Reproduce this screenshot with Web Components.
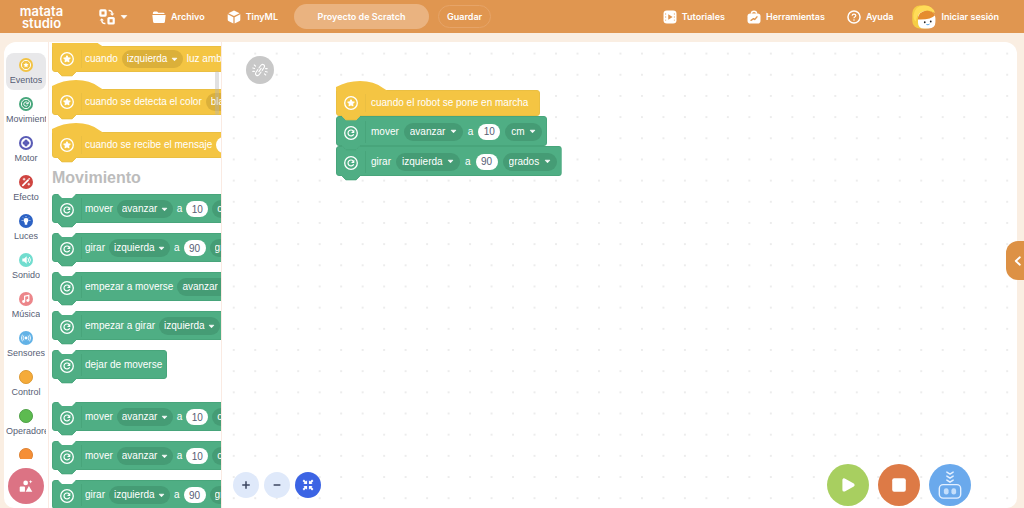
<!DOCTYPE html>
<html lang="es">
<head>
<meta charset="utf-8">
<title>Matata Studio</title>
<style>
  html, body { margin: 0; height: 100%; overflow: hidden; }
  body { background: #faeee2; font-family: Inter, "Liberation Sans", sans-serif; }
</style>
</head>
<body>
<studio-app></studio-app>
<script>
const define = (name, html, setup) => customElements.define(name, class extends HTMLElement {
  constructor() {
    super();
    const t = document.createElement('template');
    t.innerHTML = html;
    this.attachShadow({ mode: 'open' }).append(t.content.cloneNode(true));
  }
  connectedCallback() { if (setup) setup(this, this.shadowRoot); }
});

/* ---------- icons ---------- */
const STAR = '<path d="M8 4.4l1.1 2.2 2.5.4-1.8 1.7.4 2.5L8 10.1l-2.2 1.1.4-2.5-1.8-1.7 2.5-.4z" fill="#fff" stroke="#fff" stroke-width="1.2" stroke-linejoin="round"/>';
const TURN = '<path d="M10.8 9.9A3.4 3.4 0 1 1 10.6 5.8" fill="none" stroke="#fff" stroke-width="1.4" stroke-linecap="round"/><path d="M11.8 4.2v3.900H8z" fill="#fff"/>';
const ring = inner => `<circle cx="8" cy="8" r="7.2" fill="none" stroke="#fff" stroke-width="1.5"/>${inner}`;
const disc = (c, inner) => `<circle cx="8" cy="8" r="8" fill="${c}"/>${inner}`;
const ICONS = {
  event: ring(STAR),
  motion: ring(TURN),
  eventos: disc('#f2c344', '<circle cx="8" cy="8" r="5.3" fill="none" stroke="#fff" stroke-width="1.1"/><path d="M8 5l.9 1.8 2 .3-1.4 1.4.3 2L8 9.6l-1.8.9.3-2-1.4-1.4 2-.3z" fill="#fff"/>'),
  movimiento: disc('#46a67b', '<circle cx="8" cy="8" r="5.3" fill="none" stroke="#fff" stroke-width="1.1"/><path d="M10 9.2A2.4 2.4 0 1 1 9.9 6.7M10.6 5.4v2.2H8.2" fill="none" stroke="#fff" stroke-width="1.1"/>'),
  motor: disc('#595bb5', '<circle cx="8" cy="8" r="5.6" fill="#fff"/><g fill="#595bb5"><circle cx="8" cy="6" r="1.9"/><circle cx="8" cy="10" r="1.9"/><circle cx="6" cy="8" r="1.9"/><circle cx="10" cy="8" r="1.9"/></g>'),
  efecto: disc('#cf4440', '<path d="M4.4 11.8l6-6" stroke="#fff" stroke-width="2" stroke-linecap="round"/><path d="M5.8 3.3v3M4.3 4.8h3M11.2 9v3M9.7 10.5h3" stroke="#fff" stroke-width="1"/><circle cx="11.6" cy="4.4" r=".9" fill="#fff"/>'),
  luces: disc('#2c62c4', '<circle cx="8" cy="7.4" r="2.8" fill="#fff"/><path d="M6.6 9h2.8v3.2H6.6z" fill="#fff"/><path d="M3 7.4h1.2M11.8 7.4H13M8 2.4v1.200M4.600 4.100l.8.8M11.400 4.100l-.8.8" stroke="#fff" stroke-width=".9"/>'),
  sonido: disc('#71ddcf', '<path d="M3.8 6.2h2l3-2.4v8.4l-3-2.4h-2z" fill="#fff"/><path d="M10.2 5.8q1.6 2.2 0 4.4M11.8 4.6q2.6 3.4 0 6.8" fill="none" stroke="#fff" stroke-width="1.1"/>'),
  musica: disc('#ec868a', '<path d="M6.4 10.8V4.8l4.8-1v5.8" fill="none" stroke="#fff" stroke-width="1.4"/><circle cx="5.3" cy="10.8" r="1.7" fill="#fff"/><circle cx="10.1" cy="9.8" r="1.7" fill="#fff"/>'),
  sensores: disc('#62b2e6', '<circle cx="8" cy="8" r="1.7" fill="#fff"/><path d="M5.6 5.2q-2 2.8 0 5.6M10.4 5.2q2 2.8 0 5.6M3.9 4.2q-2.4 3.8 0 7.6M12.1 4.2q2.4 3.8 0 7.6" fill="none" stroke="#fff" stroke-width=".9"/>'),
  control: '<circle cx="8" cy="8" r="7.5" fill="#f5ab3a" stroke="#d9962f"/>',
  operadores: '<circle cx="8" cy="8" r="7.5" fill="#5dbb50" stroke="#4a9d42"/>',
  variables: '<circle cx="8" cy="8" r="7.5" fill="#f58f36" stroke="#da7d2c"/>',
  language: '<rect x=".3" y=".3" width="7.4" height="7.4" rx="1.6" fill="#fff"/><rect x="8.4" y="8" width="7.4" height="7.6" rx="1.6" fill="#fff"/><rect x="2.5" y="2.5" width="3" height="3" fill="#e09650"/><rect x="10.6" y="10.2" width="3" height="3.2" fill="#e09650"/><path d="M9.6 1.6q3.6-.2 3.6 3.2M6.4 14.4Q2.8 14.6 2.8 11.2" fill="none" stroke="#fff" stroke-width="1.5"/><path d="M11 4.4h4.4l-2.2 2.4zM.6 11.6H5L2.8 9.2z" fill="#fff"/>',
  folder: '<path d="M1 3.4Q1 1.6 2.6 1.6h3.2l1.4 1.600h5.600q1.600 0 1.600 1.400H1zM.4 5.600h15.200l-.8 7.400q-.2 1.800-1.600 1.800H2.800q-1.400 0-1.600-1.800z" fill="#fff"/>',
  cube: '<path d="M8 .6l6.4 3L8 6.9 1.6 3.6zM.8 4.8l6.5 3.4v7.2L1.6 12.6q-.8-.4-.8-1.4zM15.2 4.8L8.7 8.2v7.2l5.7-2.8q.8-.4.8-1.4z" fill="#fff"/>',
  video: '<rect x=".6" y=".6" width="14.8" height="14.8" rx="3.8" fill="#fff"/><path d="M6 4.8v6.4L11 8z" fill="#e09650"/><path d="M3 4v1M3 7.5v1M3 11v1M13 4v1M13 7.5v1M13 11v1" stroke="#e09650" stroke-width="1.2"/>',
  tools: '<path d="M5 4.4Q5 1.4 8 1.4t3 3" fill="none" stroke="#fff" stroke-width="1.5"/><rect x=".6" y="4" width="14.8" height="11.4" rx="3.2" fill="#fff"/><path d="M4.6 11.8l2.8-1.9 1.4 1L11.4 7.8" fill="none" stroke="#e09650" stroke-width="1.6" stroke-linecap="round" stroke-linejoin="round"/>',
  help: '<circle cx="8" cy="8" r="6.9" fill="none" stroke="#fff" stroke-width="1.7"/><path d="M5.9 6.5Q6 4.6 8 4.6t2.1 1.8Q10.1 7.4 8.9 8 8 8.5 8 9.3" fill="none" stroke="#fff" stroke-width="1.4"/><circle cx="8" cy="11.4" r=".9" fill="#fff"/>',
  avatar: '<rect x=".2" y=".4" width="14" height="15.2" rx="5" fill="#f5cd45"/><path d="M4 8q0-4 5-4.2Q15.5 4 15.6 8.6v2.8Q15.6 15.6 11 15.6H8q-4 0-4-4z" fill="#fff"/><path d="M3.8 9.6Q4 4.4 9.8 3.6q4 .2 5.6 3.2-2.8 3.2-11.6 2.8z" fill="#e58d2e"/><path d="M1 7Q2 .2 8 .3q6 0 7.3 5Q10 1.7 5.4 5.4 3 7 2.6 11 .9 10 1 7z" fill="#ffdc58"/><circle cx="8.5" cy="11.5" r=".6" fill="#222"/><circle cx="12.5" cy="11" r=".6" fill="#222"/><path d="M9.6 13q1.2.5 2.1-.3" stroke="#4a9de0" stroke-width=".6" fill="none"/>',
  unlink: '<g fill="none" stroke="#fff" stroke-width="1.1" stroke-linecap="round"><g transform="rotate(35 8 8)"><path d="M6 7V4.200Q6 1.600 8 1.600t2 2.600V7M6 9v2.800q0 2.600 2 2.600t2-2.600V9M8 6v4"/></g><path d="M.8 6l1.800.5M.8 9.400h1.600M2.300 3l1.200 1.200M15.200 10l-1.800-.5M15.200 6.600h-1.600M13.700 13l-1.200-1.200"/></g>',
  plus: '<path d="M8 3v10M3 8h10" stroke="#3c4660" stroke-width="2"/>',
  minus: '<path d="M3.5 8h9" stroke="#3c4660" stroke-width="2"/>',
  fit: '<g fill="#fff"><path d="M6.8 6.8v-5L5.2 3.4 2.6.8.8 2.6l2.600 2.600-1.600 1.600z"/><path d="M9.2 6.8v-5l1.6 1.6L13.4.8l1.8 1.8-2.600 2.600 1.600 1.600z"/><path d="M6.8 9.2v5l-1.6-1.6-2.6 2.600-1.800-1.800 2.600-2.600-1.600-1.600z"/><path d="M9.2 9.2v5l1.6-1.6 2.6 2.6 1.8-1.800-2.600-2.600 1.600-1.600z"/></g>',
  play: '<path d="M4 3v10L13 8z" fill="#fff" stroke="#fff" stroke-width="3.2" stroke-linejoin="round"/>',
  stop: '<rect x="1.2" y="1.2" width="13.6" height="13.6" rx="2" fill="#fff"/>',
  robot: '<g fill="none" stroke="#e4f0ff" stroke-linecap="round" stroke-linejoin="round"><path d="M6.2.6L8 1.8 9.8.6M6.2 2.9L8 4.1l1.8-1.2M6.2 5.2L8 6.4l1.8-1.2" stroke-width=".8"/><rect x="1.9" y="7.8" width="12.2" height="7.7" rx="2.2" stroke-width=".8"/></g><g fill="#c4dffc"><rect x="4.5" y="9.9" width="2.7" height="3.500" rx="1.3"/><rect x="8.8" y="9.9" width="2.7" height="3.500" rx="1.3"/></g>',
  extension: '<g fill="#fff"><circle cx="7.6" cy="4.5" r="2.7"/><rect x=".8" y="8.6" width="6" height="6" rx="1"/><path d="M11.3 8l3.9 6.7H7.6z"/><path d="M13.3 1l.6 1.5 1.5.6-1.5.6-.6 1.500-.6-1.500-1.500-.6 1.500-.6z"/></g>',
  back: '<path d="M10.5 3L5 8l5.5 5" fill="none" stroke="#fff" stroke-width="2.4" stroke-linecap="round" stroke-linejoin="round"/>',
  caret: '<path d="M2.5 5h11L8 11z" fill="#fff" stroke="#fff" stroke-width="1.5" stroke-linejoin="round"/>'
};

customElements.define('ui-icon', class extends HTMLElement {
  static observedAttributes = ['name'];
  constructor() {
    super();
    this.attachShadow({ mode: 'open' }).innerHTML = `<style>
      :host { display: block; flex: none; width: var(--icon, 14px); height: var(--icon, 14px); }
      svg { display: block; width: 100%; height: 100%; overflow: visible; }
    </style><svg viewBox="0 0 16 16" aria-hidden="true"></svg>`;
  }
  attributeChangedCallback(_, __, name) {
    this.shadowRoot.querySelector('svg').innerHTML = ICONS[name] || '';
  }
});

/* ---------- header ---------- */
define('header-link', `<style>
  :host { display: block; }
  a { display: flex; align-items: center; gap: 5px; color: #fff; text-decoration: none; font: 600 9px/12px Inter, sans-serif; white-space: nowrap; }
</style><a href="#"><slot name="icon"></slot><slot></slot></a>`);

define('studio-header', `<style>
  :host { display: flex; align-items: center; height: 33px; background: #e09650; color: #fff; }
  .logo { width: 47px; margin: 0 34px 0 18px; font: 600 13px/12px Inter, sans-serif; text-align: center; color: #fff; text-decoration: none; }
  .logo span { display: block; }
  button { font: 600 9px/12px Inter, sans-serif; color: #fff; border: 0; background: none; padding: 0; cursor: pointer; }
  .lang { display: flex; align-items: center; gap: 5px; margin-right: 24px; }
  .lang ui-icon:first-child { --icon: 16px; }
  .lang ui-icon:last-child { --icon: 8px; }
  .name { box-sizing: border-box; width: 135px; height: 25px; margin: 0 9px 0 16px; padding: 0; border: 0; border-radius: 13px; background: #eab380; color: #fff; text-align: center; font: 600 9px/12px Inter, sans-serif; }
  .save { height: 23px; padding: 0 8px; border: 1px solid #e6a468; border-radius: 12px; }
  nav { display: flex; align-items: center; gap: 22px; }
  .right { margin: 0 25px 0 auto; }
  .user { --icon: 24px; margin-left: -3px; }
</style>
<a class="logo" href="#"><span>matata</span><span>studio</span></a>
<button class="lang" aria-label="Idioma"><ui-icon name="language"></ui-icon><ui-icon name="caret"></ui-icon></button>
<nav>
  <header-link><ui-icon slot="icon" name="folder"></ui-icon>Archivo</header-link>
  <header-link><ui-icon slot="icon" name="cube"></ui-icon>TinyML</header-link>
</nav>
<input class="name" aria-label="Nombre del proyecto" value="Proyecto de Scratch">
<button class="save">Guardar</button>
<nav class="right">
  <header-link><ui-icon slot="icon" name="video"></ui-icon>Tutoriales</header-link>
  <header-link><ui-icon slot="icon" name="tools"></ui-icon>Herramientas</header-link>
  <header-link><ui-icon slot="icon" name="help"></ui-icon>Ayuda</header-link>
  <header-link class="user"><ui-icon slot="icon" name="avatar"></ui-icon>Iniciar sesión</header-link>
</nav>`);

/* ---------- categories ---------- */
define('category-item', `<style>
  :host { display: block; flex: none; }
  button { display: flex; flex-direction: column; align-items: center; gap: 2px; width: 100%; height: 37px; padding: 5px 0 0; border: 0; border-radius: 8px; background: none; overflow: hidden; color: #575e75; font: 400 9px/12px "Liberation Sans", sans-serif; }
  :host([selected]) button { background: #e8e8ea; }
  .label { display: block; max-width: 100%; overflow: hidden; white-space: nowrap; }
</style><button><ui-icon></ui-icon><span class="label"><slot></slot></span></button>`,
  (el, root) => root.querySelector('ui-icon').setAttribute('name', el.getAttribute('icon')));

/* ---------- blocks ---------- */
define('block-menu', `<style>
  :host { display: flex; align-items: center; height: 18px; padding: 0 var(--menu-pad, 5px); gap: var(--menu-gap, 3px); border-radius: 9px; background: var(--field); flex: none; }
  select { appearance: none; border: 0; padding: 0; margin: 0; background: none; color: #fff; font: inherit; outline: 0; }
  ui-icon { --icon: 7px; }
</style><select aria-label="Opción"><option></option></select><ui-icon name="caret"></ui-icon>`,
  (el, root) => { root.querySelector('option').textContent = el.getAttribute('value'); });

define('block-number', `<style>
  :host { display: block; flex: none; }
  input { display: block; box-sizing: border-box; width: 22px; height: 16px; border: 0; border-radius: 8px; padding: 0; background: #fff; color: #575e75; text-align: center; font: inherit; }
</style><input aria-label="Valor">`,
  (el, root) => { root.querySelector('input').value = el.getAttribute('value'); });

define('script-block', `<style>
  :host { display: flex; flex-direction: column; align-items: flex-start; flex: none; width: max-content; --fill: #4fae84; --edge: #48a57b; --field: #459c75; }
  :host([kind=event]) { --fill: #f4c543; --edge: #eabf42; --field: #dbb03a; }
  .hat { display: none; fill: var(--fill); }
  :host([kind=event]) .hat { display: block; margin-bottom: -1px; position: relative; }
  .tab { display: block; margin: -1px 0 -5px; position: relative; z-index: 1; fill: var(--fill); stroke: var(--edge); }
  .body { display: flex; align-items: center; gap: var(--part-gap, 4px); box-sizing: border-box; height: var(--body, 29px); padding: 1px 4px 0 7px; border: 1px solid var(--edge); border-radius: 3px; background: var(--fill); color: #fff; white-space: nowrap;
    font: 400 10px/14px "Liberation Sans", sans-serif;
    clip-path: polygon(0 0, 6px 0, 10px 4px, 20px 4px, 24px 0, 100% 0, 100% 100%, 0 100%); }
  :host([kind=event]) .body { height: 26px; padding: 0 var(--hat-end, 4px) 0 7px; border-top-left-radius: 0; clip-path: none; }
  .mark { display: flex; align-items: center; width: 21px; height: 22px; border-right: 1px solid var(--edge); margin-right: var(--inset, -1px); }
  .mark ui-icon { margin-top: 2px; }
  :host([kind=event]) .mark { height: 18px; }
  :host([kind=event]) .mark ui-icon { margin-top: 0; }
</style>
<svg class="hat" width="51" height="10" viewBox="0 0 51 10"><path d="M0 10V6Q11 0 24 0 38 0 47 7l4 2.5V10z"/></svg>
<div class="body"><span class="mark"><ui-icon></ui-icon></span><slot></slot></div>
<svg class="tab" width="26" height="6" viewBox="0 0 26 6"><path stroke="none" d="M6 0h18v1l-4 4H10L6 1z"/><path fill="none" d="M6 .8L9.8 4.8H20.2L24 .8"/></svg>`,
  (el, root) => root.querySelector('ui-icon').setAttribute('name', el.getAttribute('kind') || 'motion'));

define('block-palette', `<style>
  :host { display: block; position: relative; overflow: hidden; min-width: 0; }
  .list { display: flex; flex-direction: column; gap: 10px; margin-top: -6px; }
  .events { display: flex; flex-direction: column; gap: 8px; }
  h2 { margin: 0 0 -4px; font: 700 16px/20px "Liberation Sans", sans-serif; color: #bcbcbc; }
  .later { margin-top: 13px; }
  .thumb { position: absolute; top: 28px; right: 2px; width: 4px; height: 44px; border-radius: 2px; background: #b4b4b466; z-index: 2; }
</style>
<div class="list">
  <div class="events">
    <script-block kind="event">cuando <block-menu value="izquierda"></block-menu> luz ambiental</script-block>
    <script-block kind="event">cuando se detecta el color <block-menu value="blanco"></block-menu></script-block>
    <script-block kind="event">cuando se recibe el mensaje <block-number value="1"></block-number></script-block>
  </div>
  <h2>Movimiento</h2>
  <script-block>mover <block-menu value="avanzar"></block-menu> a <block-number value="10"></block-number> <block-menu value="cm"></block-menu></script-block>
  <script-block>girar <block-menu value="izquierda"></block-menu> a <block-number value="90"></block-number> <block-menu value="grados"></block-menu></script-block>
  <script-block>empezar a moverse <block-menu value="avanzar"></block-menu></script-block>
  <script-block>empezar a girar <block-menu value="izquierda"></block-menu></script-block>
  <script-block>dejar de moverse</script-block>
  <script-block class="later">mover <block-menu value="avanzar"></block-menu> a <block-number value="10"></block-number> <block-menu value="cm"></block-menu></script-block>
  <script-block>mover <block-menu value="avanzar"></block-menu> a <block-number value="10"></block-number> <block-menu value="cm"></block-menu></script-block>
  <script-block>girar <block-menu value="izquierda"></block-menu> a <block-number value="90"></block-number> <block-menu value="grados"></block-menu></script-block>
</div>
<div class="thumb"></div>`);

define('round-button', `<style>
  :host { display: block; flex: none; }
  button { display: grid; place-items: center; width: var(--size); height: var(--size); padding: 0; border: 0; border-radius: 50%; background: var(--color); }
</style><button><ui-icon></ui-icon></button>`,
  (el, root) => {
    root.querySelector('ui-icon').setAttribute('name', el.getAttribute('icon'));
    root.querySelector('button').setAttribute('aria-label', el.getAttribute('label'));
  });

define('script-stage', `<style>
  :host { display: block; position: relative; min-width: 0; overflow: hidden;
    background: radial-gradient(circle at 50% 50%, #ececec 1px, transparent 1px) 1px 1px / calc(100% / 37) calc(100% / 22); }
  .script { position: absolute; left: 114px; top: 39px; display: flex; flex-direction: column; --body: 30px; --part-gap: 5px; --inset: 0px; --menu-pad: 6px; --menu-gap: 4px; --hat-end: 11px; }
  .link { position: absolute; left: 24px; top: 14px; --size: 28px; --color: #c8c8c8; --icon: 16px; }
  .zoom { position: absolute; left: 11px; bottom: 10px; display: flex; gap: 5px; --size: 26px; --color: #dfe9fa; --icon: 12px; }
  .run { position: absolute; right: 46px; bottom: 2px; display: flex; gap: 9px; --size: 42px; --icon: 16px; }
</style>
<round-button class="link" icon="unlink" label="Conectar"></round-button>
<div class="script">
  <script-block kind="event">cuando el robot se pone en marcha</script-block>
  <script-block>mover <block-menu value="avanzar"></block-menu> a <block-number value="10"></block-number> <block-menu value="cm"></block-menu></script-block>
  <script-block>girar <block-menu value="izquierda"></block-menu> a <block-number value="90"></block-number> <block-menu value="grados"></block-menu></script-block>
</div>
<div class="zoom">
  <round-button icon="plus" label="Acercar"></round-button>
  <round-button icon="minus" label="Alejar"></round-button>
  <round-button icon="fit" label="Centrar" style="--color:#3c64e4"></round-button>
</div>
<div class="run">
  <round-button icon="play" label="Iniciar" style="--color:#a8cf60"></round-button>
  <round-button icon="stop" label="Detener" style="--color:#dd7a46"></round-button>
  <round-button icon="robot" label="Descargar" style="--color:#6aa9ec;--icon:28px"></round-button>
</div>`);

define('studio-app', `<style>
  :host { display: flex; flex-direction: column; height: 100vh; position: relative; }
  main { flex: 1; min-height: 0; display: grid; grid-template-columns: 45px 173px 1fr; grid-template-rows: minmax(0, 1fr); margin: 9px 7px 0 4px; background: #fff; border-radius: 12px 12px 10px 10px; overflow: hidden; }
  aside { display: flex; flex-direction: column; border-right: 1px solid #faeae2; padding: 11px 2px 4px; box-sizing: border-box; align-items: stretch; }
  .cats { flex: 1; min-height: 0; overflow: hidden; display: flex; flex-direction: column; gap: 2px; margin-bottom: 9px; }
  .ext { align-self: center; --size: 36px; --color: #dc7384; --icon: 14px; }
  block-palette { margin: 1px 0 0 3px; }
  .side { border-right: 1px solid #faeae2; display: grid; min-height: 0; grid-template: minmax(0, 1fr) / minmax(0, 1fr); }
  .drawer { position: absolute; right: 0; top: 241px; display: grid; place-items: center; width: 18px; height: 39px; padding: 0 0 0 6px; border: 0; border-radius: 12px 0 0 12px; background: #dd9145; --icon: 12px; }
</style>
<studio-header></studio-header>
<main>
  <aside>
    <div class="cats">
      <category-item icon="eventos" selected>Eventos</category-item>
      <category-item icon="movimiento">Movimiento</category-item>
      <category-item icon="motor">Motor</category-item>
      <category-item icon="efecto">Efecto</category-item>
      <category-item icon="luces">Luces</category-item>
      <category-item icon="sonido">Sonido</category-item>
      <category-item icon="musica">Música</category-item>
      <category-item icon="sensores">Sensores</category-item>
      <category-item icon="control">Control</category-item>
      <category-item icon="operadores">Operadores</category-item>
      <category-item icon="variables"></category-item>
    </div>
    <round-button class="ext" icon="extension" label="Extensiones"></round-button>
  </aside>
  <div class="side"><block-palette></block-palette></div>
  <script-stage></script-stage>
</main>
<button class="drawer" aria-label="Abrir panel"><ui-icon name="back"></ui-icon></button>`);
</script>
</body>
</html>
